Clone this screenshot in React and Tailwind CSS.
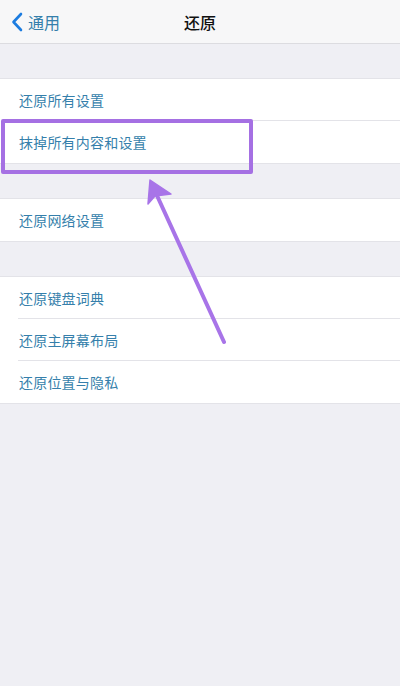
import React from "react";

// iOS "还原" settings screen with a highlight box and arrow annotation
const groups = [
  ["还原所有设置", "抹掉所有内容和设置"],
  ["还原网络设置"],
  ["还原键盘词典", "还原主屏幕布局", "还原位置与隐私"],
];

function Row({ label, last }) {
  return (
    <div className="relative h-[42px] flex items-center pl-[19px]">
      <span className="text-[14px] text-[#357fab] tracking-[0.2px]">{label}</span>
      {!last && <div className="absolute bottom-0 left-[18px] right-0 h-px bg-[#e3e3e8]" />}
    </div>
  );
}

export default function App() {
  return (
    <div
      className="relative min-h-[686px] w-[400px] bg-[#efeff4] overflow-hidden"
      style={{ fontFamily: '"Noto Sans CJK SC", "Noto Sans", sans-serif' }}
    >
      {/* Nav bar */}
      <div className="relative h-[44px] bg-[#f7f7f8] border-b border-[#dcdce0] flex items-center">
        <div className="flex items-center pl-[11px]">
          <svg width="12" height="20" viewBox="0 0 12 20" className="mr-[5px]">
            <path d="M10 2 L2.5 10 L10 18" fill="none" stroke="#1c7ce0" strokeWidth="2.6" strokeLinecap="round" strokeLinejoin="round" />
          </svg>
          <span className="text-[16px] text-[#357fab]">通用</span>
        </div>
        <div className="absolute inset-0 flex items-center justify-center">
          <span className="text-[16px] font-medium text-[#111]">还原</span>
        </div>
      </div>

      <div className="flex flex-col gap-[34px] pt-[34px]">
        {groups.map((g, i) => (
          <div key={i} className="bg-white border-y border-[#e3e3e8]">
            {g.map((label, j) => (
              <Row key={label} label={label} last={j === g.length - 1} />
            ))}
          </div>
        ))}
      </div>

      {/* Highlight box */}
      <div className="absolute left-[1px] top-[119px] w-[252px] h-[55px] border-[4px] border-[#a570e3] rounded-[2px]" />

      {/* Arrow */}
      <svg className="absolute left-0 top-0" width="400" height="686" viewBox="0 0 400 686">
        <path d="M224 342 L154 189" stroke="#a874e8" strokeWidth="4" strokeLinecap="round" fill="none" />
        <path
          d="M150 180 L148 204 L155 196 L171 194 Z"
          fill="#a874e8"
          stroke="#a874e8"
          strokeWidth="1.5"
          strokeLinejoin="round"
        />
      </svg>
    </div>
  );
}
